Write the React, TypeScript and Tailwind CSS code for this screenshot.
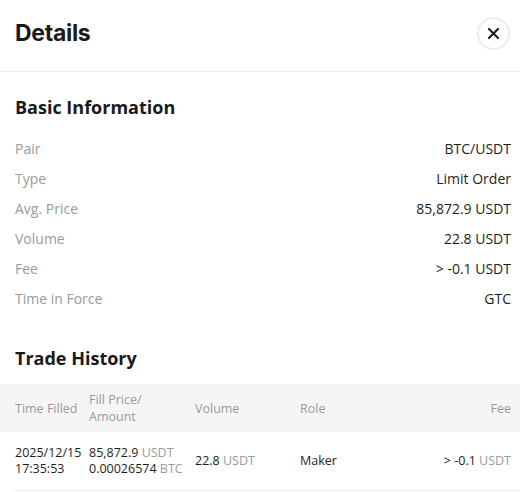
const info = [
  { label: "Pair", value: "BTC/USDT" },
  { label: "Type", value: "Limit Order" },
  { label: "Avg. Price", value: "85,872.9 USDT" },
  { label: "Volume", value: "22.8 USDT" },
  { label: "Fee", value: "> -0.1 USDT" },
  { label: "Time in Force", value: "GTC" },
];

const App = () => {
  return (
    <div className="w-[520px] h-[492px] overflow-hidden bg-white text-[#1e1e1e] font-['Open_Sans',sans-serif]">
      <header className="flex h-[72px] items-center justify-between border-b border-[#ececec] pb-[4px] pl-[15px] pr-[10px]">
        <h1 className="font-['Inter',sans-serif] text-[23px] font-bold tracking-[-0.3px] text-[#1a1a1a]">
          Details
        </h1>
        <button className="flex size-[33px] items-center justify-center rounded-full border-2 border-[#ededed] text-[#1a1a1a]">
          <svg width="11" height="11" viewBox="0 0 11 11" fill="none">
            <path
              d="M1 1L10 10M10 1L1 10"
              stroke="currentColor"
              strokeWidth="2"
              strokeLinecap="round"
            />
          </svg>
        </button>
      </header>

      <section className="pl-[15px] pr-[9px]">
        <h2 className="mt-[22px] text-[18px] font-bold leading-[26px] text-[#1a1a1a]">
          Basic Information
        </h2>
        <div className="mt-[13px]">
          {info.map((row) => (
            <div
              key={row.label}
              className="flex h-[30px] items-center justify-between text-[14px]"
            >
              <span className="text-[#9a9a9a]">{row.label}</span>
              <span>{row.value}</span>
            </div>
          ))}
        </div>
        <h2 className="mt-[32px] text-[18px] font-bold leading-[26px] text-[#1a1a1a]">
          Trade History
        </h2>
      </section>

      <div className="mt-[13px] text-[12.5px]">
        <div className="grid h-[48px] grid-cols-[74px_106px_105px_1fr_auto] items-center bg-[#f5f5f5] pl-[15px] pr-[9px] leading-[17px] text-[#9a9a9a]">
          <span>Time Filled</span>
          <span>
            Fill Price/
            <br />
            Amount
          </span>
          <span>Volume</span>
          <span>Role</span>
          <span className="text-right">Fee</span>
        </div>
        <div className="ml-[15px] grid h-[59px] grid-cols-[74px_106px_105px_1fr_auto] items-center border-b border-[#ececec] pr-[9px] leading-[16px]">
          <span>
            2025/12/15
            <br />
            17:35:53
          </span>
          <span>
            85,872.9 <span className="text-[#9a9a9a]">USDT</span>
            <br />
            0.00026574 <span className="text-[#9a9a9a]">BTC</span>
          </span>
          <span>
            22.8 <span className="text-[#9a9a9a]">USDT</span>
          </span>
          <span>Maker</span>
          <span className="text-right">
            &gt; -0.1 <span className="text-[#9a9a9a]">USDT</span>
          </span>
        </div>
      </div>
    </div>
  );
};

export default App;
